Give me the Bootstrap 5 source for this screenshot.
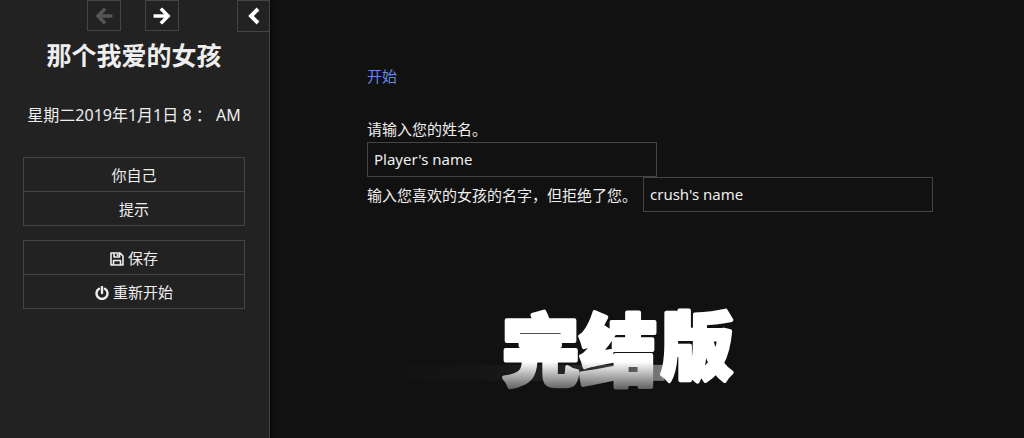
<!DOCTYPE html>
<html lang="zh-CN">
<head>
<meta charset="utf-8">
<meta name="viewport" content="width=device-width, initial-scale=1">
<title>那个我爱的女孩</title>
<link href="https://cdn.jsdelivr.net/npm/bootstrap@5.3.0/dist/css/bootstrap.min.css" rel="stylesheet">
<style>
  body { background: #111; color: #eee; font: 15px/24px "Noto Sans", "Noto Sans CJK SC", sans-serif; }
  .side { width: 270px; background: #222; border-right: 1px solid #444; box-shadow: 2px 0 4px #080808; padding: 0 24px 24px 23px; }
  .tool { width: 34px; height: 31px; border: 1px solid #444; border-radius: 0; color: #fff; background: transparent; padding: 0; line-height: 1; }
  .tool:disabled { color: #555; border-color: #444; opacity: 1; }
  .tool.toggle { width: 32px; height: 32px; margin-left: 58px; margin-right: -24px; border-right: 0; }
  .tool:hover, .menu .btn:hover { color: #fff; background: #333; border-color: #666; }
  .title { font-size: 25px; line-height: 32px; font-weight: 700; color: #eee; margin: 7px 0 0; }
  .date { font-size: 16px; margin: 32px 0 30px; }
  .menu .btn { height: 35px; border: 1px solid #444; border-radius: 0; color: #eee; font-size: 15px; line-height: 24px; padding: 4px; }
  .menu + .menu { margin-top: 14px; }
  .story { padding: 64px 88px 0 97px; min-width: 0; }
  .story a { color: #68d; text-decoration: none; }
  .prompts { margin-top: 29px; }
  .prompts .pair { column-gap: 6px; }
  .field { width: 290px; height: 35px; background: transparent; color: #eee; border: 1px solid #444; border-radius: 0; padding: 3px 6px 5px; font-size: 15px; line-height: 24px; }
  .field:focus { background: #181818; color: #eee; border-color: #666; box-shadow: none; }
  .first { margin-top: 1px; }
  .stamp { display: block; width: 100%; max-width: 570px; margin-top: 70px; }
  .stamp text { font-family: "Noto Sans CJK SC", sans-serif; font-weight: 900; stroke-width: 4px; stroke-linejoin: round; }
</style>
</head>
<body>
<div class="d-flex min-vh-100">
  <aside class="side flex-shrink-0 text-center">
    <div class="d-flex align-items-start justify-content-end">
      <button class="btn tool" type="button" disabled aria-label="后退">
        <svg width="18" height="18" viewBox="0 0 16 16" fill="none" stroke="currentColor" stroke-width="3" stroke-linecap="square" aria-hidden="true"><path d="M8 2.500 2.500 8 8 13.500M4 8h10"/></svg>
      </button>
      <button class="btn tool ms-4" type="button" aria-label="前进">
        <svg width="18" height="18" viewBox="0 0 16 16" fill="none" stroke="currentColor" stroke-width="3" stroke-linecap="square" aria-hidden="true"><path d="m8 2.500 5.500 5.500L8 13.500M12 8H2"/></svg>
      </button>
      <button class="btn tool toggle" type="button" aria-label="收起侧栏">
        <svg width="16" height="18" viewBox="0 0 16 18" fill="none" stroke="currentColor" stroke-width="4" aria-hidden="true"><path d="m12 2-7 7 7 7"/></svg>
      </button>
    </div>
    <h1 class="title">那个我爱的女孩</h1>
    <p class="date text-nowrap">星期二2019年1月1日 8 ： AM</p>
    <nav class="menu btn-group-vertical w-100">
      <button class="btn" type="button">你自己</button>
      <button class="btn" type="button">提示</button>
    </nav>
    <nav class="menu btn-group-vertical w-100">
      <button class="btn" type="button">
        <svg width="14" height="14" viewBox="0 0 14 14" fill="none" stroke="currentColor" stroke-width="1.6" stroke-linejoin="round" aria-hidden="true"><path d="M1 1h9l3 3v9H1zM3.500 13V8.500h7V13M4 1v4h5.500V1M7.500 2v2"/></svg>
        保存</button>
      <button class="btn" type="button">
        <svg width="14" height="14" viewBox="0 0 14 14" fill="none" stroke="currentColor" stroke-width="2.400" stroke-linecap="round" aria-hidden="true"><path d="M4 2.800a5.500 5.500 0 1 0 6 0M7 1v6"/></svg>
        重新开始</button>
    </nav>
  </aside>
  <main class="story flex-grow-1">
    <div><a href="#">开始</a></div>
    <div class="prompts">
      <label class="d-block" for="player">请输入您的姓名。</label>
      <input class="field first d-block" id="player" type="text" value="Player's name">
      <div class="pair d-flex flex-wrap align-items-center">
        <label for="crush">输入您喜欢的女孩的名字，但拒绝了您。</label>
        <input class="field" id="crush" type="text" value="crush's name">
      </div>
    </div>
    <svg class="stamp" viewBox="0 0 570 130" role="img" aria-label="完结版">
      <defs>
        <linearGradient id="melt" gradientUnits="userSpaceOnUse" x1="0" y1="80" x2="0" y2="118">
          <stop offset="0" stop-color="#fff"/><stop offset="1" stop-color="#222"/>
        </linearGradient>
        <linearGradient id="streak">
          <stop offset="0" stop-color="#fff" stop-opacity="0"/><stop offset=".4" stop-color="#fff" stop-opacity=".02"/>
          <stop offset=".75" stop-color="#fff" stop-opacity=".1"/><stop offset="1" stop-color="#fff" stop-opacity=".45"/>
        </linearGradient>
      </defs>
      <rect x="0" y="83" width="298" height="16" fill="url(#streak)"/>
      <text x="135" y="98" font-size="78" fill="url(#melt)" stroke="url(#melt)">完结</text>
      <text x="294" y="91" font-size="73" fill="#fff" stroke="#fff">版</text>
    </svg>
  </main>
</div>
<script src="https://cdn.jsdelivr.net/npm/bootstrap@5.3.0/dist/js/bootstrap.bundle.min.js"></script>
</body>
</html>
